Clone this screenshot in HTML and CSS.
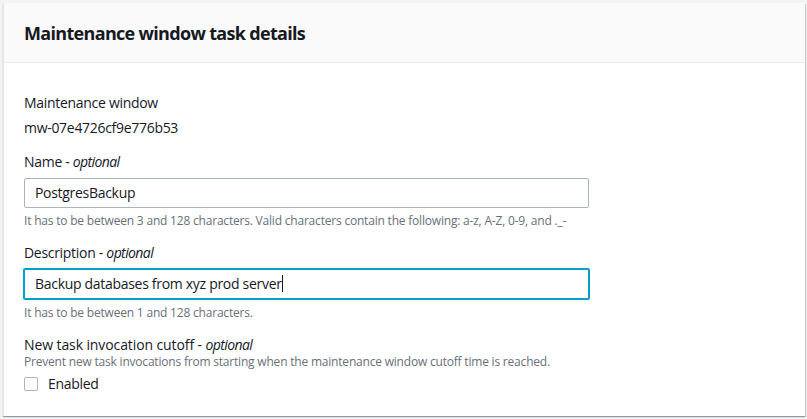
FILE: index.html
```html
<!DOCTYPE html>
<html lang="en">
<head>
<meta charset="utf-8">
<title>Maintenance window task details</title>
<link rel="stylesheet" href="styles.css">
</head>
<body>
<div class="card">
  <div class="card-header">
    <h2 class="card-title">Maintenance window task details</h2>
  </div>
  <div class="card-body">
    <div class="field field-static">
      <div class="label">Maintenance window</div>
      <div class="value">mw-07e4726cf9e776b53</div>
    </div>
    <div class="field">
      <div class="label">Name - <i>optional</i></div>
      <div class="input">PostgresBackup</div>
      <div class="hint">It has to be between 3 and 128 characters. Valid characters contain the following: a-z, A-Z, 0-9, and ._-</div>
    </div>
    <div class="field">
      <div class="label">Description - <i>optional</i></div>
      <div class="input input-focus">Backup databases from xyz prod server<span class="caret"></span></div>
      <div class="hint">It has to be between 1 and 128 characters.</div>
    </div>
    <div class="field field-last">
      <div class="label">New task invocation cutoff - <i>optional</i></div>
      <div class="desc">Prevent new task invocations from starting when the maintenance window cutoff time is reached.</div>
      <label class="check-row"><span class="checkbox"></span><span class="check-label">Enabled</span></label>
    </div>
  </div>
</div>
</body>
</html>
```

FILE: styles.css
```css
* { box-sizing: border-box; }
html, body { margin: 0; padding: 0; }
body {
  background: #f2f3f3;
  font-family: "Open Sans", "Noto Sans", sans-serif;
  color: #16191f;
  padding: 3px 2px 6px 3px;
}
.card {
  background: #ffffff;
  border-left: 1px solid #e4e7e7;
  box-shadow: 0 1px 1px 0 rgba(0, 28, 36, 0.3), 1px 1px 1px 0 rgba(0, 28, 36, 0.15);
}
.card-header {
  background: #fafafa;
  border-bottom: 1px solid #eaeded;
  height: 60px;
  padding: 0 20px;
  display: flex;
  align-items: center;
}
.card-title {
  margin: 0;
  font-size: 18px;
  font-weight: 700;
  line-height: 24px;
  letter-spacing: -0.68px;
  padding-top: 1px;
}
.card-body {
  padding: 29px 20px 22px 20px;
}
.field { margin-bottom: 13px; }
.field-last { margin-bottom: 0; }
.label {
  font-size: 14px;
  line-height: 22px;
  letter-spacing: -0.3px;
}
.label i { font-style: italic; letter-spacing: -0.6px; }
.field-last .label { letter-spacing: -0.1px; }
.value {
  font-size: 14px;
  line-height: 22px;
  margin-top: 3px;
  letter-spacing: -0.3px;
}
.field-static { margin-bottom: 12px; }
.input {
  margin-top: 5px;
  width: 565px;
  height: 30px;
  border: 1px solid #aab7b8;
  border-radius: 2px;
  padding: 0 10px;
  font-size: 14px;
  line-height: 28px;
  letter-spacing: -0.3px;
}
.input-focus {
  border: 2px solid #00a1c9;
  height: 32px;
  width: 567px;
  margin-left: -1px;
  margin-top: 4px;
  line-height: 28px;
}
.caret {
  display: inline-block;
  width: 1px;
  height: 17px;
  background: #16191f;
  vertical-align: -3px;
}
.hint {
  margin-top: 5px;
  font-size: 12px;
  line-height: 16px;
  color: #687078;
  letter-spacing: -0.2px;
}
.desc {
  margin-top: -2px;
  font-size: 12px;
  line-height: 16px;
  color: #687078;
  letter-spacing: -0.2px;
}
.check-row {
  display: flex;
  align-items: center;
  margin-top: 4px;
}
.checkbox {
  width: 14px;
  height: 14px;
  border: 1px solid #aab7b8;
  border-radius: 2px;
  background: #fff;
}
.check-label {
  margin-left: 10px;
  font-size: 14px;
  line-height: 20px;
  letter-spacing: -0.3px;
}
```
